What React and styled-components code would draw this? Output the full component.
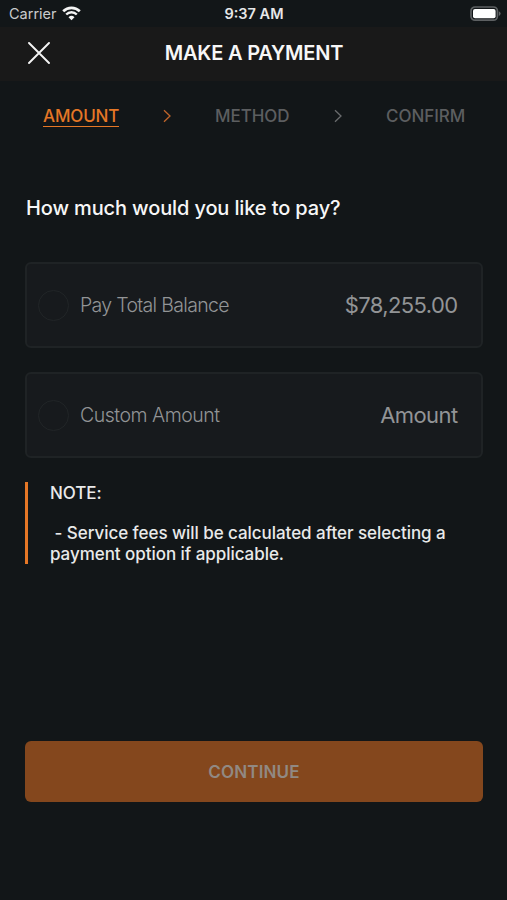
import React, { useState } from "react";
import styled, { createGlobalStyle } from "styled-components";

const COLORS = {
  BACKGROUND: "#121618",
  HEADER: "#191919",
  CARD: "#171a1d",
  BORDER: "#1f2325",
  ACCENT: "#e57726",
  WHITE: "#f7f7f7",
  MUTED: "#5c5e60",
  LABEL: "#929496",
};

const STEPS = [
  { name: "AMOUNT", width: 76, spacing: -0.15 },
  { name: "METHOD", width: 75, spacing: -0.05 },
  { name: "CONFIRM", width: 79, spacing: -0.05 },
];

const OPTIONS = [
  { id: "total", label: "Pay Total Balance", value: "$78,255.00", spacing: -0.68, valueSpacing: -0.6 },
  { id: "custom", label: "Custom Amount", value: "Amount", spacing: -0.48, valueSpacing: -0.6 },
];

function WifiIcon() {
  return (
    <svg width="19" height="15" viewBox="0 0 19 15" fill="none">
      <path d="M1.2 5.2A11.8 11.8 0 0 1 17.8 5.2" stroke="#f4f4f4" strokeWidth="2.7" />
      <path d="M4.2 8.5A7.5 7.5 0 0 1 14.8 8.5" stroke="#f4f4f4" strokeWidth="2.4" />
      <path d="M9.5 14.2L6.5 11.3A4.3 4.3 0 0 1 12.5 11.3Z" fill="#f4f4f4" />
    </svg>
  );
}

function BatteryIcon() {
  return (
    <svg width="31" height="16" viewBox="0 0 31 16" fill="none">
      <rect x="1" y="1" width="26.4" height="13.2" rx="4" stroke="#5d6062" strokeWidth="1.7" />
      <rect x="3" y="3" width="22.6" height="9.3" rx="2" fill="#fff" />
      <path d="M28.8 5.2Q30.6 6 30.6 7.6Q30.6 9.2 28.8 10Z" fill="#626567" />
    </svg>
  );
}

function CloseIcon() {
  return (
    <svg width="22" height="22" viewBox="0 0 22 22" fill="none">
      <path d="M1 1L21 21M21 1L1 21" stroke="#f4f4f4" strokeWidth="1.9" strokeLinecap="round" />
    </svg>
  );
}

function Chevron({ active }) {
  return (
    <svg width="8" height="14" viewBox="0 0 8 14" fill="none">
      <path
        d="M1 1.2L7 7L1 12.8"
        stroke={active ? "#c0652a" : "#6a6c6e"}
        strokeWidth="1.3"
      />
    </svg>
  );
}

function App() {
  const [selected, setSelected] = useState(null);

  return (
    <Screen>
      <GlobalStyle />
      <StatusBar>
        <Carrier>
          Carrier
          <WifiIcon />
        </Carrier>
        <Time>9:37 AM</Time>
        <Battery>
          <BatteryIcon />
        </Battery>
      </StatusBar>

      <Header>
        <CloseButton aria-label="Close">
          <CloseIcon />
        </CloseButton>
        <Title>MAKE A PAYMENT</Title>
      </Header>

      <Steps>
        {STEPS.map((step, index) => (
          <React.Fragment key={step.name}>
            {index > 0 && <Chevron active={index === 1} />}
            <Step $active={index === 0} $width={step.width} $spacing={step.spacing}>
              {step.name}
            </Step>
          </React.Fragment>
        ))}
      </Steps>

      <Content>
        <Question>How much would you like to pay?</Question>
        <Options>
          {OPTIONS.map((option) => (
            <Option key={option.id} onClick={() => setSelected(option.id)}>
              <Radio $checked={selected === option.id} />
              <Label $spacing={option.spacing}>{option.label}</Label>
              <Value $spacing={option.valueSpacing}>{option.value}</Value>
            </Option>
          ))}
        </Options>
        <Note>
          <NoteText>NOTE:</NoteText>
          <NoteText>
            {" - Service fees will be calculated after selecting a\npayment option if applicable."}
          </NoteText>
        </Note>
        <ContinueButton disabled={!selected}>CONTINUE</ContinueButton>
      </Content>
    </Screen>
  );
}

const GlobalStyle = createGlobalStyle`
  * {
    box-sizing: border-box;
  }
  body {
    margin: 0;
    background-color: ${COLORS.BACKGROUND};
  }
  button {
    font-family: inherit;
    border: none;
    padding: 0;
  }
`;

const Screen = styled.div`
  width: 507px;
  height: 900px;
  display: flex;
  flex-direction: column;
  overflow: hidden;
  background-color: ${COLORS.BACKGROUND};
  color: ${COLORS.WHITE};
  font-family: Inter, "Liberation Sans", sans-serif;
  white-space: nowrap;
`;

const StatusBar = styled.div`
  height: 27px;
  display: grid;
  grid-template-columns: 1fr auto 1fr;
  align-items: center;
  padding: 0 6px 0 9px;
  font-size: 14.5px;
`;

const Carrier = styled.div`
  display: flex;
  align-items: center;
  gap: 5px;
  color: #c9cbcc;
`;

const Time = styled.div`
  margin-right: 2px;
  font-weight: 600;
  color: #e6e7e8;
`;

const Battery = styled.div`
  display: flex;
  justify-content: flex-end;
`;

const Header = styled.header`
  height: 54px;
  display: grid;
  grid-template-columns: 50px 1fr 49px;
  align-items: center;
  padding: 0 0 3px;
  background-color: ${COLORS.HEADER};
`;

const CloseButton = styled.button`
  display: flex;
  padding-left: 28px;
  background: none;
`;

const Title = styled.h1`
  margin: 0;
  text-align: center;
  font-size: 20px;
  line-height: 24px;
  font-weight: 600;
  letter-spacing: -0.2px;
`;

const Steps = styled.nav`
  height: 70px;
  display: flex;
  align-items: center;
  gap: 44px;
  padding-left: 43px;
`;

const Step = styled.span`
  width: ${(props) => props.$width}px;
  font-size: 17px;
  line-height: 20px;
  font-weight: 500;
  letter-spacing: ${(props) => props.$spacing}px;
  border-bottom: 1.5px solid ${(props) => (props.$active ? COLORS.ACCENT : "transparent")};
  color: ${(props) => (props.$active ? COLORS.ACCENT : COLORS.MUTED)};
`;

const Content = styled.main`
  flex: 1;
  display: flex;
  flex-direction: column;
  padding: 45px 24px 98px 25px;
`;

const Question = styled.h2`
  margin: 0 0 0 1px;
  font-size: 20px;
  line-height: 24px;
  font-weight: 500;
  letter-spacing: -0.13px;
`;

const Options = styled.div`
  display: flex;
  flex-direction: column;
  gap: 24px;
  margin-top: 42px;
`;

const Option = styled.div`
  height: 86px;
  display: flex;
  align-items: center;
  padding: 0 23.5px 0 10.5px;
  border: 2px solid ${COLORS.BORDER};
  border-radius: 6px;
  background-color: ${COLORS.CARD};
`;

const Radio = styled.span`
  width: 31px;
  height: 31px;
  border: 1.5px solid #212527;
  border-radius: 50%;
  background-color: ${(props) => (props.$checked ? COLORS.ACCENT : "transparent")};
`;

const Label = styled.span`
  flex: 1;
  margin-left: 11.5px;
  font-size: 19.5px;
  font-weight: 300;
  letter-spacing: ${(props) => props.$spacing}px;
  color: ${COLORS.LABEL};
`;

const Value = styled.span`
  font-size: 22px;
  letter-spacing: ${(props) => props.$spacing}px;
  color: ${COLORS.LABEL};
`;

const Note = styled.div`
  height: 82px;
  display: flex;
  flex-direction: column;
  justify-content: space-between;
  margin-top: 24px;
  padding-top: 1px;
  padding-left: 22px;
  border-left: 3px solid ${COLORS.ACCENT};
`;

const NoteText = styled.p`
  margin: 0;
  font-size: 17px;
  line-height: 20.4px;
  font-weight: 500;
  letter-spacing: -0.05px;
  white-space: pre;
  color: #e9eaea;
`;

const ContinueButton = styled.button`
  height: 61px;
  margin-top: auto;
  border-radius: 6px;
  background-color: #84471d;
  color: #918983;
  font-size: 17px;
  font-weight: 600;
  letter-spacing: 0.15px;
`;

export default App;
